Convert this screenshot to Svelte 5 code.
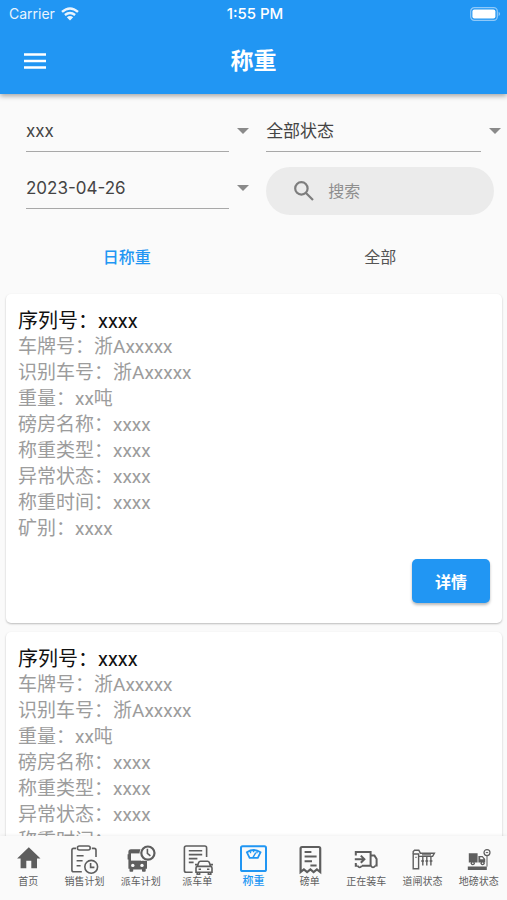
<script>
  let site = $state('xxx');
  let status = $state('全部状态');
  let date = $state('2023-04-26');
  let tab = $state('日称重');

  const record = {
    title: '序列号：xxxx',
    lines: [
      '车牌号：浙Axxxxx',
      '识别车号：浙Axxxxx',
      '重量：xx吨',
      '磅房名称：xxxx',
      '称重类型：xxxx',
      '异常状态：xxxx',
      '称重时间：xxxx',
      '矿别：xxxx'
    ]
  };
  const records = [record, record];
  const tabs = ['日称重', '全部'];
  const nav = [
    { id: 'home', label: '首页' },
    { id: 'sales', label: '销售计划' },
    { id: 'dispatch', label: '派车计划' },
    { id: 'order', label: '派车单' },
    { id: 'weigh', label: '称重' },
    { id: 'slip', label: '磅单' },
    { id: 'loading', label: '正在装车' },
    { id: 'gate', label: '道闸状态' },
    { id: 'scale', label: '地磅状态' }
  ];
</script>

{#snippet caret()}
  <svg class="caret" viewBox="0 0 12 6" aria-hidden="true"><path d="M0 0h12L6 6z" /></svg>
{/snippet}

{#snippet icon(id)}
  <svg class="nav-icon" viewBox="0 0 32 32" aria-hidden="true">
    {#if id === 'home'}
      <path class="solid" d="M16.8 4.3 28.5 15.6H25V25.2H19.3V17.8H14.3V25.2H8.6V15.6H5.1Z" />
    {:else if id === 'sales'}
      <g stroke-width="1.6">
        <rect x="9.4" y="3" width="12.8" height="4" rx="2" />
        <path d="M8 5.4H5.6Q3.9 5.4 3.9 7.2V27Q3.9 28.8 5.6 28.8H13.8M23.8 5.4H26.2Q28 5.4 28 7.2V14M8.6 12.7H15.6M8.6 17.7H14.6M8.6 22.7H12.6" />
        <circle cx="23.2" cy="23.8" r="6.4" />
        <path d="M22.6 20V24.4H26.4" />
      </g>
    {:else if id === 'dispatch'}
      <path class="solid" d="M6 6.3H16V17.8H22V25.8H20.7V28Q20.7 28.8 19.9 28.8H17.8Q17 28.8 17 28V26.4H8.2V28Q8.2 28.8 7.4 28.8H5.3Q4.5 28.8 4.5 28V25.8H3.4V16.6H2.6V11.2H3.4V9Q3.4 6.3 6 6.3Z" />
      <path class="paper" d="M6 10.4H17V17.6H6Z" />
      <circle class="paper" cx="7.8" cy="22.4" r="1.7" />
      <circle class="paper" cx="17" cy="22.4" r="1.7" />
      <circle class="paper" cx="22.9" cy="10.1" r="8.4" />
      <circle cx="22.9" cy="10.1" r="6.6" stroke-width="2.2" />
      <path d="M22.4 5.8V10.4L25.4 12.8" stroke-width="1.6" />
      <path class="solid" d="M15 18H22V20H15Z" />
    {:else if id === 'order'}
      <g stroke-width="1.6">
        <path d="M11.6 29.2H5.2Q3.4 29.2 3.4 27.4V4.8Q3.4 3 5.2 3H23.8Q25.6 3 25.6 4.8V14M7.8 7.8H21.2M7.8 11.6H21.2M7.8 15.6H16.4M7.8 19.4H12.6" />
        <path d="M16.2 23.6 17.8 19.3Q18.2 18.2 19.4 18.2H26.6Q27.8 18.2 28.2 19.3L29.8 23.6M14 21.6H16.6M29.4 21.6H32M16.6 23.4H29.4Q31 23.4 31 25V29.2H15V25Q15 23.4 16.6 23.4ZM16.2 29.2V31.2H18.6V29.4M27.4 29.4V31.2H29.8V29.2M17.6 26.2H20M26 26.2H28.4" />
      </g>
    {:else if id === 'weigh'}
      <rect x="4" y="3.2" width="25" height="24.8" rx="1.6" stroke-width="2" />
      <path d="M9.9 9.3Q16.7 4.7 23.5 9.3L20.8 14.8H12.6Z" stroke-width="1.8" />
      <path d="M16 14.4 18.8 9.7M13.5 8.3V10.2M20 8.3V10.2M16.6 7.3V9.2" stroke-width="1.4" />
    {:else if id === 'slip'}
      <path d="M6.6 29V5.4Q6.6 4 8 4H24.8Q26.2 4 26.2 5.4V29L22.9 26.4 19.6 29 16.4 26.4 13.1 29 9.9 26.4Z" stroke-width="2.2" />
      <path d="M10.6 9H17.4M10.6 13.4H22.6M10.6 18.2H18M16.4 22.6H22.6" stroke-width="2" />
    {:else if id === 'loading'}
      <path d="M5.8 12.4V9H20.6V23M20.6 12.4H24.4L26.6 16V22.6H25.2M20.6 22.8H12M7.4 22.8H5.8V20M4.8 16.2H14.2M10.8 12.6 14.4 16.2 10.8 19.8" stroke-width="2" />
      <path d="M7.6 22.8Q9.7 26 11.8 22.8M20.8 22.8Q23 26 25.2 22.8" stroke-width="1.8" />
    {:else if id === 'gate'}
      <path d="M7.2 11H12.6V25.8H7.2Z" stroke-width="1.4" />
      <path d="M7.2 10.8V8.6L8.6 7.2H12.8L14.4 10.2H28.4L26.6 13.4H12.6" stroke-width="1.4" />
      <path d="M9.4 14.4H10.6M16 11.8H25" stroke-width="1.2" />
      <path d="M16.8 13.6V22.4M20.8 13.6V22.4M24.9 13.6V22.4M15.2 18H18M19.4 18H22.2M23.6 18H26.4" stroke-width="1.4" />
    {:else}
      <path class="solid" d="M5.8 10.3H14.6V19.6H5.8ZM15.4 13H19.6L22.2 16V19.6H15.4ZM4.8 23.6H23.8V27H4.8Z" />
      <path class="paper" d="M17.2 14.2H19.2L20.6 16.2H17.2Z" />
      <circle class="solid" cx="9.8" cy="20.2" r="2.1" />
      <circle class="solid" cx="19.6" cy="20.2" r="2.1" />
      <circle class="paper" cx="9.8" cy="20.2" r="0.8" />
      <circle class="paper" cx="19.6" cy="20.2" r="0.8" />
      <circle cx="24" cy="9.6" r="3" stroke-width="1.2" />
      <path d="M24 12.8V23.6M22.8 9.6H25.2" stroke-width="1" />
    {/if}
  </svg>
{/snippet}

<div class="app">
  <header>
    <div class="status">
      <div class="carrier">
        <span>Carrier</span>
        <svg class="wifi" viewBox="0 0 18 14" aria-hidden="true">
          <path d="M1 4.9Q9-2 17 4.9M3.9 8Q9 3.8 14.1 8" />
          <path class="dot" d="M5.8 10.2Q9 7.6 12.2 10.2L9 13.6Z" />
        </svg>
      </div>
      <span class="clock">1:55 PM</span>
      <svg class="battery" viewBox="0 0 31 14" aria-hidden="true">
        <rect class="shell" x="0.7" y="0.7" width="26.6" height="12.6" rx="3.6" />
        <rect x="2.4" y="2.6" width="23" height="9" rx="2" />
        <path class="tip" d="M28.6 4.8Q31.6 7 28.6 9.2Z" />
      </svg>
    </div>
    <div class="bar">
      <button class="menu" aria-label="菜单">
        <svg viewBox="0 0 24 18" aria-hidden="true"><path d="M1 2.5H23M1 9H23M1 15.5H23" /></svg>
      </button>
      <h1>称重</h1>
    </div>
  </header>

  <main>
    <div class="filters">
      <div class="field">
        <select bind:value={site} aria-label="磅房"><option>xxx</option></select>
        {@render caret()}
      </div>
      <div class="field">
        <select bind:value={status} aria-label="状态"><option>全部状态</option></select>
        {@render caret()}
      </div>
      <div class="field">
        <select bind:value={date} aria-label="日期"><option>2023-04-26</option></select>
        {@render caret()}
      </div>
      <label class="search">
        <svg viewBox="0 0 20 20" aria-hidden="true"><circle cx="7.4" cy="7.4" r="6.2" /><path d="M12 12 19 19" /></svg>
        <input type="search" placeholder="搜索" aria-label="搜索" />
      </label>
    </div>

    <div class="tabs" role="tablist">
      {#each tabs as name}
        <button role="tab" aria-selected={tab === name} class:active={tab === name} onclick={() => (tab = name)}>{name}</button>
      {/each}
    </div>

    <div class="list">
      {#each records as r}
        <article>
          <h2>{r.title}</h2>
          {#each r.lines as line}<p>{line}</p>{/each}
          <button class="detail">详情</button>
        </article>
      {/each}
    </div>
  </main>

  <nav>
    {#each nav as item}
      <a href={'#' + item.id} class:active={item.id === 'weigh'}>
        {@render icon(item.id)}
        <span>{item.label}</span>
      </a>
    {/each}
  </nav>
</div>

<style>
  .app {
    height: 100vh;
    display: flex;
    flex-direction: column;
    overflow: hidden;
    background: #fafafa;
    color: #444;
    font-family: Inter, 'Noto Sans CJK SC', sans-serif;
  }
  button,
  select,
  input {
    font: inherit;
    border: 0;
    margin: 0;
    padding: 0;
    background: none;
  }
  header {
    flex: none;
    position: relative;
    background: #2196f3;
    color: #fff;
    box-shadow: 0 2px 5px rgba(0, 0, 0, 0.35);
  }
  .status {
    display: grid;
    grid-template-columns: 1fr auto 1fr;
    align-items: center;
    height: 26px;
    padding: 1px 6px 0 9px;
    font-size: 14px;
    line-height: 20px;
  }
  .carrier {
    display: flex;
    align-items: center;
    gap: 6px;
    opacity: 0.9;
  }
  .clock {
    font-size: 15px;
    font-weight: 500;
  }
  .wifi {
    width: 18px;
    height: 14px;
    fill: none;
    stroke: #fff;
    stroke-width: 2.4;
  }
  .wifi .dot {
    fill: #fff;
    stroke: none;
  }
  .battery {
    width: 31px;
    height: 14px;
    justify-self: end;
    fill: #fff;
  }
  .battery .shell {
    fill: none;
    stroke: #8fc9f9;
    stroke-width: 1.2;
  }
  .battery .tip {
    fill: #8fc9f9;
  }
  .bar {
    display: grid;
    grid-template-columns: 1fr auto 1fr;
    align-items: center;
    height: 67px;
    padding: 0 23px;
  }
  .menu {
    display: flex;
    width: 24px;
    height: 18px;
    color: #fff;
  }
  .menu svg {
    width: 24px;
    height: 18px;
    fill: none;
    stroke: currentColor;
    stroke-width: 2.6;
  }
  h1 {
    margin: 0;
    font-size: 23px;
    line-height: 32px;
    font-weight: 600;
  }
  main {
    flex: 1;
    min-height: 0;
    overflow: hidden;
  }
  .filters {
    display: grid;
    grid-template-columns: minmax(0, 19fr) minmax(0, 20fr);
    align-items: start;
    gap: 15px 17px;
    padding: 16px 6px 0 26px;
  }
  .field {
    display: flex;
    align-items: center;
    gap: 8px;
    height: 42px;
  }
  select {
    appearance: none;
    flex: 1;
    min-width: 0;
    height: 42px;
    border-bottom: 1px solid #a8a8a8;
    border-radius: 0;
    color: #444;
    font-size: 17px;
  }
  .caret {
    width: 12px;
    height: 6px;
    fill: #8a8a8a;
  }
  .search {
    display: flex;
    align-items: center;
    gap: 14px;
    height: 48px;
    margin-right: 7px;
    padding: 0 24px 0 28px;
    border-radius: 24px;
    background: #ebebeb;
  }
  .search svg {
    flex: none;
    width: 20px;
    height: 20px;
    fill: none;
    stroke: #7d7d7d;
    stroke-width: 2.2;
  }
  .search input {
    flex: 1;
    min-width: 0;
    font-size: 16px;
    line-height: 24px;
    outline: none;
  }
  .search input::placeholder {
    color: #8e8e8e;
    opacity: 1;
  }
  .tabs {
    display: grid;
    grid-template-columns: 1fr 1fr;
    margin-top: 17px;
  }
  .tabs button {
    height: 48px;
    font-size: 16px;
    font-weight: 400;
    color: #555;
  }
  .tabs .active {
    color: #2196f3;
    font-weight: 500;
  }
  .list {
    display: flex;
    flex-direction: column;
    gap: 9px;
    padding: 14px 5px 14px 6px;
  }
  article {
    display: flex;
    flex-direction: column;
    padding: 14px 12px 20px;
    border-radius: 5px;
    background: #fff;
    box-shadow: 0 1px 2px rgba(0, 0, 0, 0.25);
    font-family: Roboto, 'Noto Sans CJK SC', sans-serif;
  }
  h2 {
    margin: 0;
    font-size: 20px;
    line-height: 26px;
    font-weight: 400;
    color: #111;
  }
  p {
    margin: 0;
    font-size: 19px;
    line-height: 26px;
    color: #9c9c9c;
  }
  .detail {
    align-self: flex-end;
    margin-top: 17px;
    width: 78px;
    height: 44px;
    border-radius: 5px;
    background: #2196f3;
    color: #fff;
    font-size: 16px;
    font-weight: 600;
    box-shadow: 0 2px 3px rgba(0, 0, 0, 0.28);
  }
  nav {
    flex: none;
    position: relative;
    display: grid;
    grid-template-columns: repeat(9, 1fr);
    height: 64px;
    background: #fafafa;
    box-shadow: 0 -1px 3px rgba(0, 0, 0, 0.06);
  }
  nav a {
    display: flex;
    flex-direction: column;
    align-items: center;
    padding-top: 7px;
    color: #5e5e5e;
    font-size: 10px;
    line-height: 12px;
    text-decoration: none;
    white-space: nowrap;
  }
  nav a.active {
    color: #2196f3;
    font-size: 11px;
    font-weight: 500;
  }
  .nav-icon {
    width: 32px;
    height: 32px;
    overflow: visible;
    fill: none;
    stroke: currentColor;
  }
  .nav-icon .solid {
    fill: currentColor;
    stroke: none;
  }
  .nav-icon .paper {
    fill: #fafafa;
    stroke: none;
  }
</style>
